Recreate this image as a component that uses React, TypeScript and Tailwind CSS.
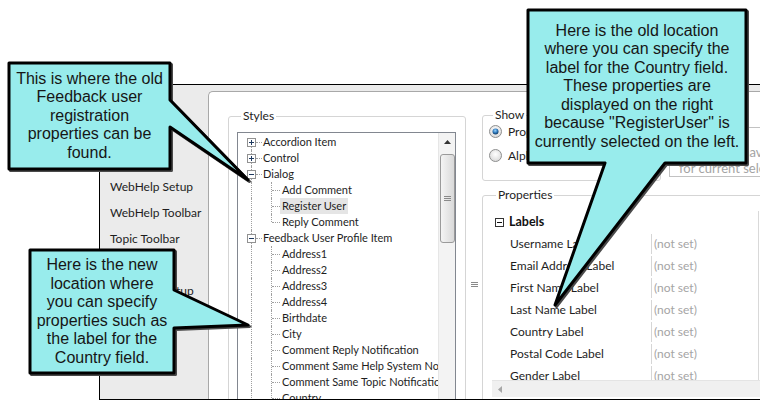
import React from 'react';

type TreeNode = {
  label: string;
  depth: 0 | 1;
  sign?: '+' | '-';
  first?: boolean;
  lastChild?: boolean;
  selected?: boolean;
};

const TREE: TreeNode[] = [
  { label: 'Accordion Item', depth: 0, sign: '+', first: true },
  { label: 'Control', depth: 0, sign: '+' },
  { label: 'Dialog', depth: 0, sign: '-' },
  { label: 'Add Comment', depth: 1 },
  { label: 'Register User', depth: 1, selected: true },
  { label: 'Reply Comment', depth: 1, lastChild: true },
  { label: 'Feedback User Profile Item', depth: 0, sign: '-' },
  { label: 'Address1', depth: 1 },
  { label: 'Address2', depth: 1 },
  { label: 'Address3', depth: 1 },
  { label: 'Address4', depth: 1 },
  { label: 'Birthdate', depth: 1 },
  { label: 'City', depth: 1 },
  { label: 'Comment Reply Notification', depth: 1 },
  { label: 'Comment Same Help System Notification', depth: 1 },
  { label: 'Comment Same Topic Notification', depth: 1 },
  { label: 'Country', depth: 1 },
  { label: 'Email Address', depth: 1 },
];

const SIDEBAR = ['General', 'Size', 'Styles', 'WebHelp Setup', 'WebHelp Toolbar', 'Topic Toolbar', 'Language', 'Feedback Setup'];

const PROPS = [
  'Username Label',
  'Email Address Label',
  'First Name Label',
  'Last Name Label',
  'Country Label',
  'Postal Code Label',
  'Gender Label',
  'Birthdate Label',
];

function Expander({ sign }: { sign: '+' | '-' }) {
  return (
    <svg width="9" height="9" viewBox="0 0 9 9" className="absolute left-[9px] top-[4px]">
      <rect x="0.5" y="0.5" width="8" height="8" fill="#fff" stroke="#919191" />
      <path d="M2 4.5h5" stroke="#1f3a60" />
      {sign === '+' && <path d="M4.5 2v5" stroke="#1f3a60" />}
    </svg>
  );
}

function TreeRow({ n }: { n: TreeNode }) {
  return (
    <div className="relative h-[16px] leading-[16px] whitespace-nowrap">
      {/* root connector */}
      <span
        className={`absolute left-[13px] bottom-0 border-l border-dotted border-[#a0a0a0] ${
          n.first ? 'top-[8px]' : 'top-0'
        }`}
      />
      {n.depth === 0 ? (
        <>
          <span className="absolute left-[18px] top-[8px] w-[6px] border-t border-dotted border-[#a0a0a0]" />
          <Expander sign={n.sign ?? '+'} />
          <span className="pl-[25px]">{n.label}</span>
        </>
      ) : (
        <>
          <span
            className={`absolute left-[33px] top-0 border-l border-dotted border-[#a0a0a0] ${
              n.lastChild ? 'h-[8px]' : 'bottom-0'
            }`}
          />
          <span className="absolute left-[34px] top-[8px] w-[8px] border-t border-dotted border-[#a0a0a0]" />
          <span className={`ml-[42px] px-[2px] inline-block ${n.selected ? 'bg-[#e5e5e5]' : ''}`}>{n.label}</span>
        </>
      )}
    </div>
  );
}

function Grip() {
  return (
    <svg width="7" height="6" viewBox="0 0 7 6">
      <path d="M0 0.5h7M0 2.5h7M0 4.5h7" stroke="#8a8a8a" />
    </svg>
  );
}

function Radio({ checked }: { checked?: boolean }) {
  return (
    <svg width="13" height="13" viewBox="0 0 13 13">
      <defs>
        <radialGradient id="rg-off" cx="50%" cy="40%" r="60%">
          <stop offset="0%" stopColor="#ffffff" />
          <stop offset="100%" stopColor="#d9d9d9" />
        </radialGradient>
        <radialGradient id="rg-on" cx="45%" cy="35%" r="60%">
          <stop offset="0%" stopColor="#9ad3fb" />
          <stop offset="60%" stopColor="#2f7bbf" />
          <stop offset="100%" stopColor="#123f6a" />
        </radialGradient>
      </defs>
      <circle cx="6.5" cy="6.5" r="6" fill="url(#rg-off)" stroke="#8e8f8f" />
      {checked && <circle cx="6.5" cy="6.5" r="3" fill="url(#rg-on)" />}
    </svg>
  );
}

type CalloutProps = {
  points: string;
  left: number;
  top: number;
  width: number;
  height: number;
  lines: string[];
};

const CALLOUTS: CalloutProps[] = [
  {
    points: '9,63 170,63 170,100 248,180 170,127 170,169 9,169',
    left: 9,
    top: 63,
    width: 161,
    height: 106,
    lines: ['This is where the old', 'Feedback user', 'registration', 'properties can be', 'found.'],
  },
  {
    points: '30,250 174,250 174,290 248,325 174,328 174,373 30,373',
    left: 30,
    top: 250,
    width: 144,
    height: 123,
    lines: ['Here is the new', 'location where', 'you can specify', 'properties such as', 'the label for the', 'Country field.'],
  },
  {
    points: '528,10 746,10 746,163 665,163 555,305 605,163 528,163',
    left: 528,
    top: 10,
    width: 218,
    height: 153,
    lines: [
      'Here is the old location',
      'where you can specify the',
      'label for the Country field.',
      'These properties are',
      'displayed on the right',
      'because "RegisterUser" is',
      'currently selected on the left.',
    ],
  },
];

export default function App() {
  return (
    <div className="relative w-[760px] h-[401px] overflow-hidden bg-white font-['Lato',sans-serif] text-[12px] text-[#1e1e1e]">
      <div className="pt-[84px] pl-[99px]">
        {/* captured window */}
        <div className="w-[700px] h-[316px] border border-black border-r-0 bg-[#ebebeb] flex overflow-hidden">
          {/* skin editor tabs */}
          <div className="w-[108px] shrink-0 pt-[11px] pl-[10px]">
            {SIDEBAR.map((s) => (
              <div key={s} className="h-[26px] leading-[26px] whitespace-nowrap">
                {s}
              </div>
            ))}
          </div>

          {/* content panel */}
          <div className="flex-1 min-w-0 mt-[6px] bg-white border-l border-t border-[#a8a8a8] rounded-tl-[5px] flex">
            {/* Styles */}
            <fieldset className="ml-[19px] mt-[16px] w-[238px] min-w-0 h-[300px] shrink-0 border border-[#d5d5d5] rounded-[3px] pl-[8px] pr-[9px] pt-[8px]">
              <legend className="ml-[4px] px-[2px] leading-[16px]">Styles</legend>
              <div className="h-[280px] border border-[#828790] flex bg-white">
                <div className="flex-1 min-w-0 overflow-hidden pt-[1px] text-[11px]">
                  {TREE.map((n) => (
                    <TreeRow key={n.label} n={n} />
                  ))}
                </div>
                <div className="w-[17px] shrink-0 bg-[#f3f3f3] border-l border-[#e6e6e6] flex flex-col items-center">
                  <div className="h-[17px] flex items-center justify-center">
                    <svg width="7" height="4" viewBox="0 0 7 4">
                      <path d="M0 4L3.5 0L7 4Z" fill="#333" />
                    </svg>
                  </div>
                  <div className="mt-[4px] w-[15px] h-[89px] rounded-[3px] border border-[#9a9a9a] bg-gradient-to-r from-[#f4f4f4] to-[#d9d9d9] flex items-center justify-center">
                    <Grip />
                  </div>
                </div>
              </div>
            </fieldset>

            {/* splitter */}
            <div className="w-[16px] shrink-0 flex justify-center pt-[190px] pl-[1px]">
              <Grip />
            </div>

            {/* right column */}
            <div className="flex-1 min-w-0 flex flex-col">
              <div className="flex items-start">
                <fieldset className="mt-[15px] w-[179px] min-w-0 h-[74px] shrink-0 border border-[#d5d5d5] rounded-[3px] pl-[6px] pt-[2px]">
                  <legend className="ml-[4px] px-[2px] leading-[16px]">Show</legend>
                  <div className="flex flex-col gap-[11px]">
                    <div className="h-[13px] flex items-center gap-[6px] whitespace-nowrap">
                      <Radio checked />
                      <span>Properties</span>
                    </div>
                    <div className="h-[13px] flex items-center gap-[6px] whitespace-nowrap">
                      <Radio />
                      <span>Alphabetical</span>
                    </div>
                  </div>
                </fieldset>
                <div className="ml-[8px] mt-[35px] w-[200px] h-[50px] shrink-0 border border-[#c2c2c2] pt-[16px] pl-[9px] text-[13px] leading-[16px] text-[#a3a3a3] whitespace-nowrap overflow-hidden">
                  <div>Styles that have</div>
                  <div>for current selection</div>
                </div>
              </div>

              {/* Properties */}
              <fieldset className="mt-[6px] w-[320px] min-w-0 h-[220px] shrink-0 border border-[#d5d5d5] rounded-[3px] pl-[9px] pt-[8px]">
                <legend className="ml-[4px] px-[2px] leading-[16px]">Properties</legend>
                <div className="w-[267px] h-[169px] overflow-hidden border-r border-[#d9d9d9]">
                  <div className="h-[22px] flex items-center pl-[3px] gap-[5px]">
                    <svg width="9" height="9" viewBox="0 0 9 9">
                      <rect x="0.5" y="0.5" width="8" height="8" fill="#fff" stroke="#333" />
                      <path d="M2 4.5h5" stroke="#111" />
                    </svg>
                    <span className="font-bold text-[12.5px] text-[#111]">Labels</span>
                  </div>
                  {PROPS.map((p) => (
                    <div key={p} className="h-[22px] flex whitespace-nowrap">
                      <div className="w-[159px] shrink-0 pl-[18px] leading-[22px]">{p}</div>
                      <div className="my-[1px] border-l border-[#d6d6d6] pl-[2px] leading-[20px] text-[#a5a5a5]">(not set)</div>
                    </div>
                  ))}
                </div>
                <div className="w-[300px] h-[17px] bg-[#f0f0f0] border-t border-[#e4e4e4] flex items-center pl-[6px]">
                  <svg width="4" height="7" viewBox="0 0 4 7">
                    <path d="M4 0L0 3.5L4 7Z" fill="#a6a6a6" />
                  </svg>
                </div>
              </fieldset>
            </div>
          </div>
        </div>
      </div>

      {/* callouts */}
      <svg width="760" height="401" className="absolute left-0 top-0 pointer-events-none">
        {CALLOUTS.map((c) => (
          <g key={c.points}>
            <polygon points={c.points} transform="translate(1.5,1.5)" fill="#4a4a4a" stroke="#4a4a4a" strokeWidth="3" strokeLinejoin="round" />
            <polygon points={c.points} fill="#98ecec" stroke="#000" strokeWidth="3" strokeLinejoin="round" />
          </g>
        ))}
      </svg>
      {CALLOUTS.map((c) => (
        <div
          key={c.left}
          className="absolute flex items-center justify-center text-center font-['Liberation_Sans',Arial,sans-serif] text-[16px] leading-[18.5px] text-[#161616] whitespace-nowrap"
          style={{ left: c.left, top: c.top, width: c.width, height: c.height }}
        >
          <div>
            {c.lines.map((l) => (
              <div key={l}>{l}</div>
            ))}
          </div>
        </div>
      ))}
    </div>
  );
}
